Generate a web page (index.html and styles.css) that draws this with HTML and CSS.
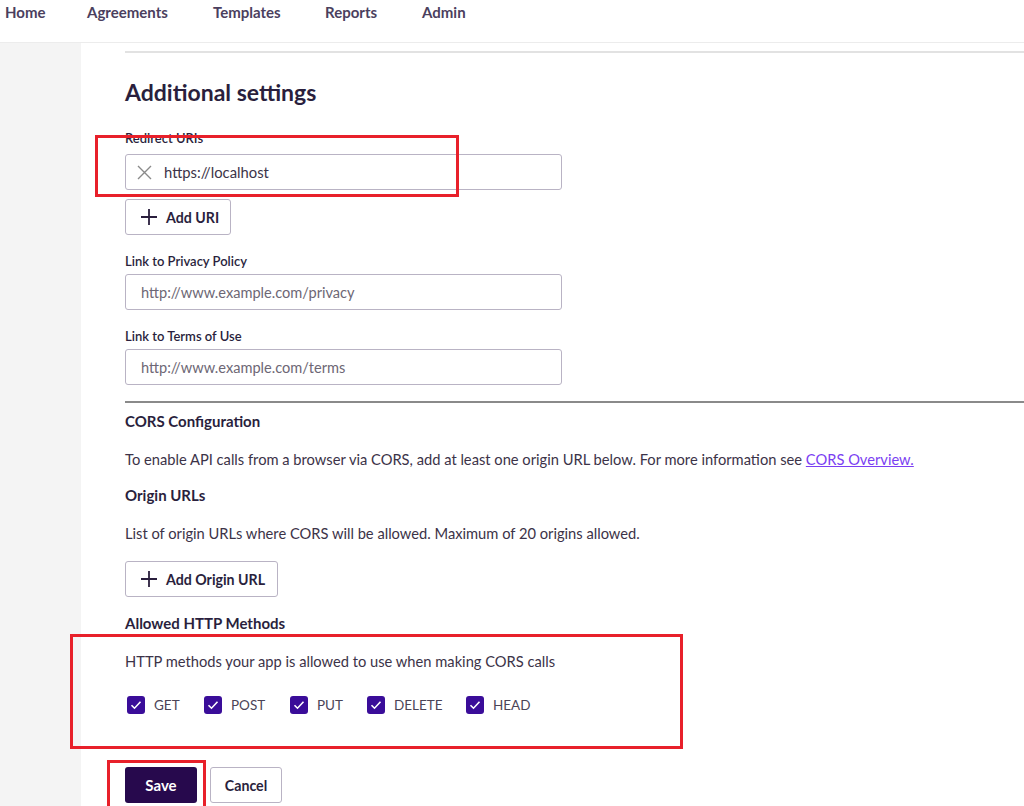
FILE: index.html
```html
<!DOCTYPE html>
<html lang="en">
<head>
    <meta charset="UTF-8">
    <title>Additional settings</title>
    <link rel="stylesheet" href="styles.css">
</head>
<body>
    <div class="topnav">
        <a href="#" class="nav-home">Home</a>
        <a href="#" class="nav-agr">Agreements</a>
        <a href="#" class="nav-tpl">Templates</a>
        <a href="#" class="nav-rep">Reports</a>
        <a href="#" class="nav-adm">Admin</a>
    </div>

    <div class="page">
        <div class="sidebar"></div>

        <div class="main">
            <div class="top-rule"></div>

            <h2 class="section-title">Additional settings</h2>

            <div class="field-label redirect-label">Redirect URIs</div>
            <div class="input-field uri-field">
                <svg class="x-icon" width="15" height="15" viewBox="0 0 15 15"><path d="M1 1L14 14M14 1L1 14" stroke="#8a8a8a" stroke-width="1.4" fill="none"/></svg>
                <span>https://localhost</span>
            </div>
            <button class="btn-outline add-uri"><svg class="plus" width="16" height="16" viewBox="0 0 16 16"><path d="M8 0V16M0 8H16" stroke="#2a1f3d" stroke-width="1.8" fill="none"/></svg>Add URI</button>

            <div class="field-label">Link to Privacy Policy</div>
            <div class="input-field placeholder">http://www.example.com/privacy</div>

            <div class="field-label">Link to Terms of Use</div>
            <div class="input-field placeholder">http://www.example.com/terms</div>

            <div class="mid-rule"></div>

            <div class="sub-title cors-title">CORS Configuration</div>
            <p class="text">To enable API calls from a browser via CORS, add at least one origin URL below. For more information see <a href="#" class="link">CORS Overview.</a></p>

            <div class="sub-title origin-title">Origin URLs</div>
            <p class="text list-text">List of origin URLs where CORS will be allowed. Maximum of 20 origins allowed.</p>

            <button class="btn-outline add-origin"><svg class="plus" width="16" height="16" viewBox="0 0 16 16"><path d="M8 0V16M0 8H16" stroke="#2a1f3d" stroke-width="1.8" fill="none"/></svg>Add Origin URL</button>

            <div class="sub-title methods-title">Allowed HTTP Methods</div>
            <p class="text methods-text">HTTP methods your app is allowed to use when making CORS calls</p>

            <div class="methods">
                <label class="check"><span class="box"><svg width="18" height="18" viewBox="0 0 18 18"><path d="M4.5 9.2L7.5 12.2L13.5 5.8" stroke="#fff" stroke-width="1.6" fill="none"/></svg></span>GET</label>
                <label class="check"><span class="box"><svg width="18" height="18" viewBox="0 0 18 18"><path d="M4.5 9.2L7.5 12.2L13.5 5.8" stroke="#fff" stroke-width="1.6" fill="none"/></svg></span>POST</label>
                <label class="check"><span class="box"><svg width="18" height="18" viewBox="0 0 18 18"><path d="M4.5 9.2L7.5 12.2L13.5 5.8" stroke="#fff" stroke-width="1.6" fill="none"/></svg></span>PUT</label>
                <label class="check"><span class="box"><svg width="18" height="18" viewBox="0 0 18 18"><path d="M4.5 9.2L7.5 12.2L13.5 5.8" stroke="#fff" stroke-width="1.6" fill="none"/></svg></span>DELETE</label>
                <label class="check"><span class="box"><svg width="18" height="18" viewBox="0 0 18 18"><path d="M4.5 9.2L7.5 12.2L13.5 5.8" stroke="#fff" stroke-width="1.6" fill="none"/></svg></span>HEAD</label>
            </div>

            <div class="actions">
                <button class="btn-save">Save</button>
                <button class="btn-outline btn-cancel">Cancel</button>
            </div>
        </div>
    </div>

    <!-- red annotation boxes drawn over the screenshot -->
    <div class="mark mark-uri"></div>
    <div class="mark mark-methods"></div>
    <div class="mark mark-save"></div>
</body>
</html>
```

FILE: styles.css
```css
body {
    margin: 0;
    padding: 0;
    font-family: Lato, "Liberation Sans", sans-serif;
    color: #2a1f3d;
    background: #fff;
    overflow: hidden;
}
.topnav {
    height: 42px;
    border-bottom: 1px solid #ececec;
    position: relative;
}
.topnav a {
    position: absolute;
    top: 3px;
    font-size: 15px;
    font-weight: 700;
    color: #4b3f5e;
    text-decoration: none;
}
.nav-home { left: 5px; }
.nav-agr { left: 87px; }
.nav-tpl { left: 213px; }
.nav-rep { left: 325px; }
.nav-adm { left: 422px; }

.page {
    display: flex;
    height: 763px;
}
.sidebar {
    width: 81px;
    background-color: #f4f4f4;
    flex-shrink: 0;
}
.main {
    flex: 1;
    padding-left: 44px;
}
.top-rule {
    margin-top: 8px;
    height: 2px;
    background: #e2e2e2;
}
.section-title {
    margin: 25px 0 0;
    font-size: 23px;
    font-weight: 700;
    color: #2a1f3d;
    line-height: 28px;
}
.field-label {
    font-size: 13px;
    font-weight: 600;
    color: #2a1f3d;
    line-height: 16px;
    margin-top: 18px;
    margin-bottom: 5px;
}
.redirect-label {
    margin-top: 24px;
    margin-bottom: 8px;
}
.input-field {
    width: 437px;
    height: 36px;
    box-sizing: border-box;
    border: 1px solid #b9b3c4;
    border-radius: 3px;
    display: flex;
    align-items: center;
    padding-left: 15px;
    font-size: 14.6px;
    color: #3c3348;
}
.input-field.placeholder {
    color: #6d6775;
}
.uri-field {
    padding-left: 11px;
    font-size: 14.8px;
}
.x-icon {
    margin-right: 12px;
}
.btn-outline {
    font-family: Lato, "Liberation Sans", sans-serif;
    background: #fff;
    border: 1px solid #b9b3c4;
    border-radius: 3px;
    height: 36px;
    font-size: 14.2px;
    font-weight: 700;
    color: #2a1f3d;
    padding: 0 0 0 15px;
    display: flex;
    align-items: center;
    cursor: pointer;
}
.plus {
    margin-right: 9px;
    flex-shrink: 0;
}
.add-uri {
    margin-top: 9px;
    width: 106px;
}
.mid-rule {
    margin-top: 16px;
    height: 2px;
    background: #8a8a8a;
}
.sub-title {
    font-size: 15px;
    font-weight: 700;
    color: #2a1f3d;
    margin-top: 9px;
    line-height: 18px;
}
.text {
    font-size: 14.7px;
    color: #3c3348;
    margin: 20px 0 0;
    line-height: 18px;
}
.link {
    color: #7b3ff2;
    text-decoration: underline;
}
.origin-title {
    margin-top: 18px;
}
.list-text {
    margin-top: 20px;
}
.add-origin {
    margin-top: 19px;
    width: 153px;
}
.methods-title {
    margin-top: 17px;
}
.methods-text {
    margin-top: 20px;
}
.methods {
    display: flex;
    margin-top: 26px;
    padding-left: 2px;
}
.check {
    display: flex;
    align-items: center;
    font-size: 13.5px;
    color: #4b4457;
}
.check:nth-child(1) { width: 77px; }
.check:nth-child(2) { width: 86px; }
.check:nth-child(3) { width: 77px; }
.check:nth-child(4) { width: 99px; }
.box {
    width: 18px;
    height: 18px;
    border-radius: 3px;
    background: #3a0d99;
    display: inline-block;
    margin-right: 9px;
}
.box svg {
    display: block;
}
.actions {
    display: flex;
    margin-top: 53px;
    gap: 13px;
}
.btn-save {
    font-family: Lato, "Liberation Sans", sans-serif;
    width: 72px;
    height: 36px;
    background: #27094d;
    color: #fff;
    border: none;
    border-radius: 3px;
    font-size: 15px;
    font-weight: 700;
}
.btn-cancel {
    width: 72px;
    justify-content: center;
    padding: 0;
}

.mark {
    position: absolute;
    border: 3px solid #e8202a;
}
.mark-uri {
    left: 95px;
    top: 135px;
    width: 358px;
    height: 56px;
}
.mark-methods {
    left: 70px;
    top: 634px;
    width: 607px;
    height: 109px;
}
.mark-save {
    left: 107px;
    top: 760px;
    width: 93px;
    height: 60px;
}
```
